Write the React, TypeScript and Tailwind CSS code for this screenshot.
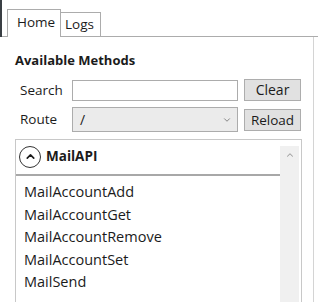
import { ChevronDown, ChevronUp } from 'lucide-react'

const methods = ['MailAccountAdd', 'MailAccountGet', 'MailAccountRemove', 'MailAccountSet', 'MailSend']

export default function App() {
  return (
    <div
      className="w-[318px] h-[302px] bg-white overflow-hidden text-[#1b1b1b]"
      style={{ fontFamily: '"Open Sans", "Noto Sans", sans-serif' }}
    >
      {/* Tab strip */}
      <div className="flex items-end h-[37px]">
        <div className="w-[2px] h-full bg-[#3a3f44]" />
        <div className="w-[5px] h-full border-b border-[#acacac]" />
        <div className="h-[28px] w-[54px] border border-b-0 border-[#acacac] bg-white text-[13.5px] leading-[24px] pl-[9px]">
          Home
        </div>
        <div className="h-[25px] w-[40px] border border-l-0 border-[#acacac] bg-white text-[13.5px] leading-[22px] pl-[4px]">
          Logs
        </div>
        <div className="flex-1 h-full border-b border-[#acacac]" />
      </div>

      {/* Content panel */}
      <div className="w-[314px] h-[265px] border-r border-[#d4d4d4] pl-[15px]">
        <div className="pt-[14px] text-[13px] leading-[18px] font-bold">Available Methods</div>

        <div className="mt-[10px] flex items-center h-[22px]">
          <span className="w-[57px] pl-[5px] text-[13.5px]">Search</span>
          <input className="w-[166px] h-[21px] border border-[#acacac] bg-white outline-none" />
          <button className="ml-[6px] w-[57px] h-[22px] border border-[#adadad] bg-[#e1e1e1] text-[14px] leading-[18px]">
            Clear
          </button>
        </div>

        <div className="mt-[6px] flex items-center h-[25px]">
          <span className="w-[57px] pl-[5px] text-[13.5px]">Route</span>
          <div className="w-[166px] h-[25px] border border-[#acacac] bg-[#ebebeb] flex items-center justify-between pl-[7px] pr-[5px] text-[14px]">
            <span>/</span>
            <ChevronDown className="w-[10px] h-[10px] text-[#707070]" strokeWidth={2} />
          </div>
          <button className="ml-[6px] w-[57px] h-[22px] border border-[#adadad] bg-[#e1e1e1] text-[13.5px] leading-[18px]">
            Reload
          </button>
        </div>

        {/* Method list */}
        <div className="mt-[7px] w-[287px] h-[170px] border border-[#c8c8c8] flex">
          <div className="flex-1">
            <div className="flex items-center h-[36px] pl-[3px] pb-[1px] border-b-2 border-[#a8a8a8]">
              <div className="w-[22px] h-[22px] rounded-full border-[1.5px] border-[#333] flex items-center justify-center">
                <ChevronUp className="w-[13px] h-[13px]" strokeWidth={3} />
              </div>
              <span className="ml-[5px] text-[13.5px] font-bold">MailAPI</span>
            </div>
            <div className="pl-[8px] pt-[5px]">
              {methods.map(m => (
                <div key={m} className="h-[22.5px] leading-[22.5px] text-[14.5px]">
                  {m}
                </div>
              ))}
            </div>
          </div>
          <div className="mt-[6px] mr-[2px] w-[19px] bg-[#f0f0f0] flex justify-center pt-[4px]">
            <ChevronUp className="w-[10px] h-[10px] text-[#a0a0a0]" strokeWidth={2.5} />
          </div>
        </div>
      </div>
    </div>
  )
}
